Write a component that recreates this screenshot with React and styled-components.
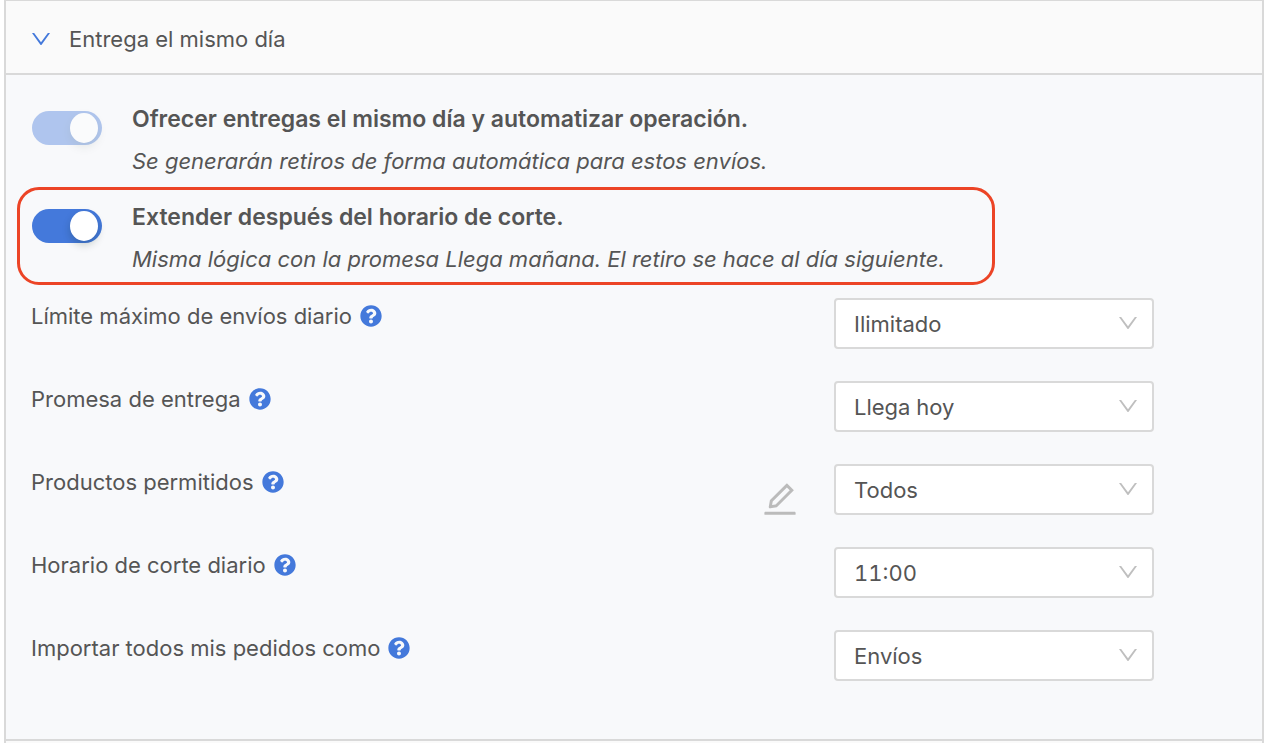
import { useState } from "react";
import styled, { createGlobalStyle } from "styled-components";
import { AiOutlineDown, AiOutlineEdit } from "react-icons/ai";
import { FaQuestionCircle } from "react-icons/fa";

const GlobalStyle = createGlobalStyle`
  * {
    box-sizing: border-box;
  }
  body {
    margin: 0;
    background: #ffffff;
    color: #555555;
    font-family: Inter, "Liberation Sans", sans-serif;
    font-size: 22px;
  }
  button, select {
    font: inherit;
    color: inherit;
  }
`;

const Page = styled.main`
  display: flex;
  flex-direction: column;
  min-height: 100vh;
  padding: 0 3px 0 4px;
`;

const Collapse = styled.div`
  flex: 1;
  border: 2px solid #d9d9d9;
  border-width: 1px 2px 0;
  background: #fafafa;
`;

const Header = styled.button`
  display: flex;
  align-items: center;
  gap: 16px;
  width: 100%;
  height: 72px;
  padding: 4px 23px 0;
  border: none;
  background: #fafafa;
  text-align: left;
  cursor: pointer;
  svg {
    color: #4479db;
  }
`;

const Body = styled.div`
  padding: 14px 0 58px;
  border: 2px solid #d9d9d9;
  border-width: 2px 0;
  background: #f8f9fb;
`;

const Option = styled.div`
  display: flex;
  gap: 30px;
  max-width: 978px;
  margin: 0 11px;
  padding: 6px 12px 2px;
  border: 3px solid ${(props) => (props.$highlight ? "#ec4426" : "transparent")};
  border-radius: 22px;
`;

const Toggle = styled.input`
  appearance: none;
  flex: none;
  display: flex;
  align-items: center;
  justify-content: flex-start;
  width: 70px;
  height: 34px;
  margin: 13px 0 0;
  padding: 0 4px;
  border-radius: 17px;
  background: #bfbfbf;
  cursor: pointer;
  &:checked {
    justify-content: flex-end;
    background: #4479db;
  }
  &:disabled {
    opacity: 0.4;
    cursor: not-allowed;
  }
  &::after {
    content: "";
    width: 28px;
    height: 30px;
    border-radius: 50%;
    background: #ffffff;
    box-shadow: 0 4px 8px rgba(0, 35, 11, 0.2);
  }
`;

const OptionText = styled.label`
  line-height: 42px;
`;

const OptionTitle = styled.strong`
  display: block;
  font-size: 23px;
  font-weight: 600;
`;

const OptionHint = styled.em`
  display: block;
`;

const Fields = styled.div`
  display: flex;
  flex-direction: column;
  gap: 32px;
  padding: 13px 108px 0 25px;
`;

const Field = styled.div`
  display: flex;
  align-items: flex-start;
`;

const LabelGroup = styled.div`
  flex: 1;
  display: flex;
  align-items: center;
  gap: 8px;
  line-height: 36px;
  svg {
    color: #4479db;
  }
`;

const EditButton = styled.button`
  display: flex;
  align-items: flex-end;
  height: 51px;
  margin-right: 34px;
  padding: 0;
  border: none;
  background: none;
  color: #bbbbbb;
  cursor: pointer;
  svg {
    margin-bottom: -4px;
  }
`;

const SelectBox = styled.div`
  position: relative;
  width: 320px;
  svg {
    position: absolute;
    top: 13px;
    right: 14px;
    color: #bfbfbf;
    pointer-events: none;
  }
`;

const Select = styled.select`
  appearance: none;
  display: block;
  width: 100%;
  height: 51px;
  padding: 0 48px 0 18px;
  border: 2px solid #d9d9d9;
  border-radius: 4px;
  background: #ffffff;
  && {
    font-variant-numeric: tabular-nums;
  }
`;

const fields = [
  { id: "limite", label: "Límite máximo de envíos diario", value: "Ilimitado" },
  { id: "promesa", label: "Promesa de entrega", value: "Llega hoy" },
  { id: "productos", label: "Productos permitidos", value: "Todos", editable: true },
  { id: "horario", label: "Horario de corte diario", value: "11:00" },
  { id: "importar", label: "Importar todos mis pedidos como", value: "Envíos" },
];

function SelectField({ id, label, value, editable }) {
  return (
    <Field>
      <LabelGroup>
        <label htmlFor={id}>{label}</label>
        <FaQuestionCircle size={22} />
      </LabelGroup>
      {editable && (
        <EditButton type="button" aria-label="Editar productos">
          <AiOutlineEdit size={40} />
        </EditButton>
      )}
      <SelectBox>
        <Select id={id} defaultValue={value}>
          <option>{value}</option>
        </Select>
        <AiOutlineDown size={24} />
      </SelectBox>
    </Field>
  );
}

function App() {
  const [open, setOpen] = useState(true);
  const [extended, setExtended] = useState(true);

  return (
    <>
      <GlobalStyle />
      <Page>
        <Collapse>
          <Header type="button" aria-expanded={open} onClick={() => setOpen(!open)}>
            <AiOutlineDown size={24} />
            Entrega el mismo día
          </Header>
          {open && (
            <Body>
              <Option>
                <Toggle id="ofrecer" type="checkbox" defaultChecked disabled />
                <OptionText htmlFor="ofrecer">
                  <OptionTitle>
                    Ofrecer entregas el mismo día y automatizar operación.
                  </OptionTitle>
                  <OptionHint>
                    Se generarán retiros de forma automática para estos envíos.
                  </OptionHint>
                </OptionText>
              </Option>
              <Option $highlight>
                <Toggle
                  id="extender"
                  type="checkbox"
                  checked={extended}
                  onChange={(e) => setExtended(e.target.checked)}
                />
                <OptionText htmlFor="extender">
                  <OptionTitle>Extender después del horario de corte.</OptionTitle>
                  <OptionHint>
                    Misma lógica con la promesa Llega mañana. El retiro se hace al
                    día siguiente.
                  </OptionHint>
                </OptionText>
              </Option>
              <Fields>
                {fields.map((field) => (
                  <SelectField key={field.id} {...field} />
                ))}
              </Fields>
            </Body>
          )}
        </Collapse>
      </Page>
    </>
  );
}

export default App;
